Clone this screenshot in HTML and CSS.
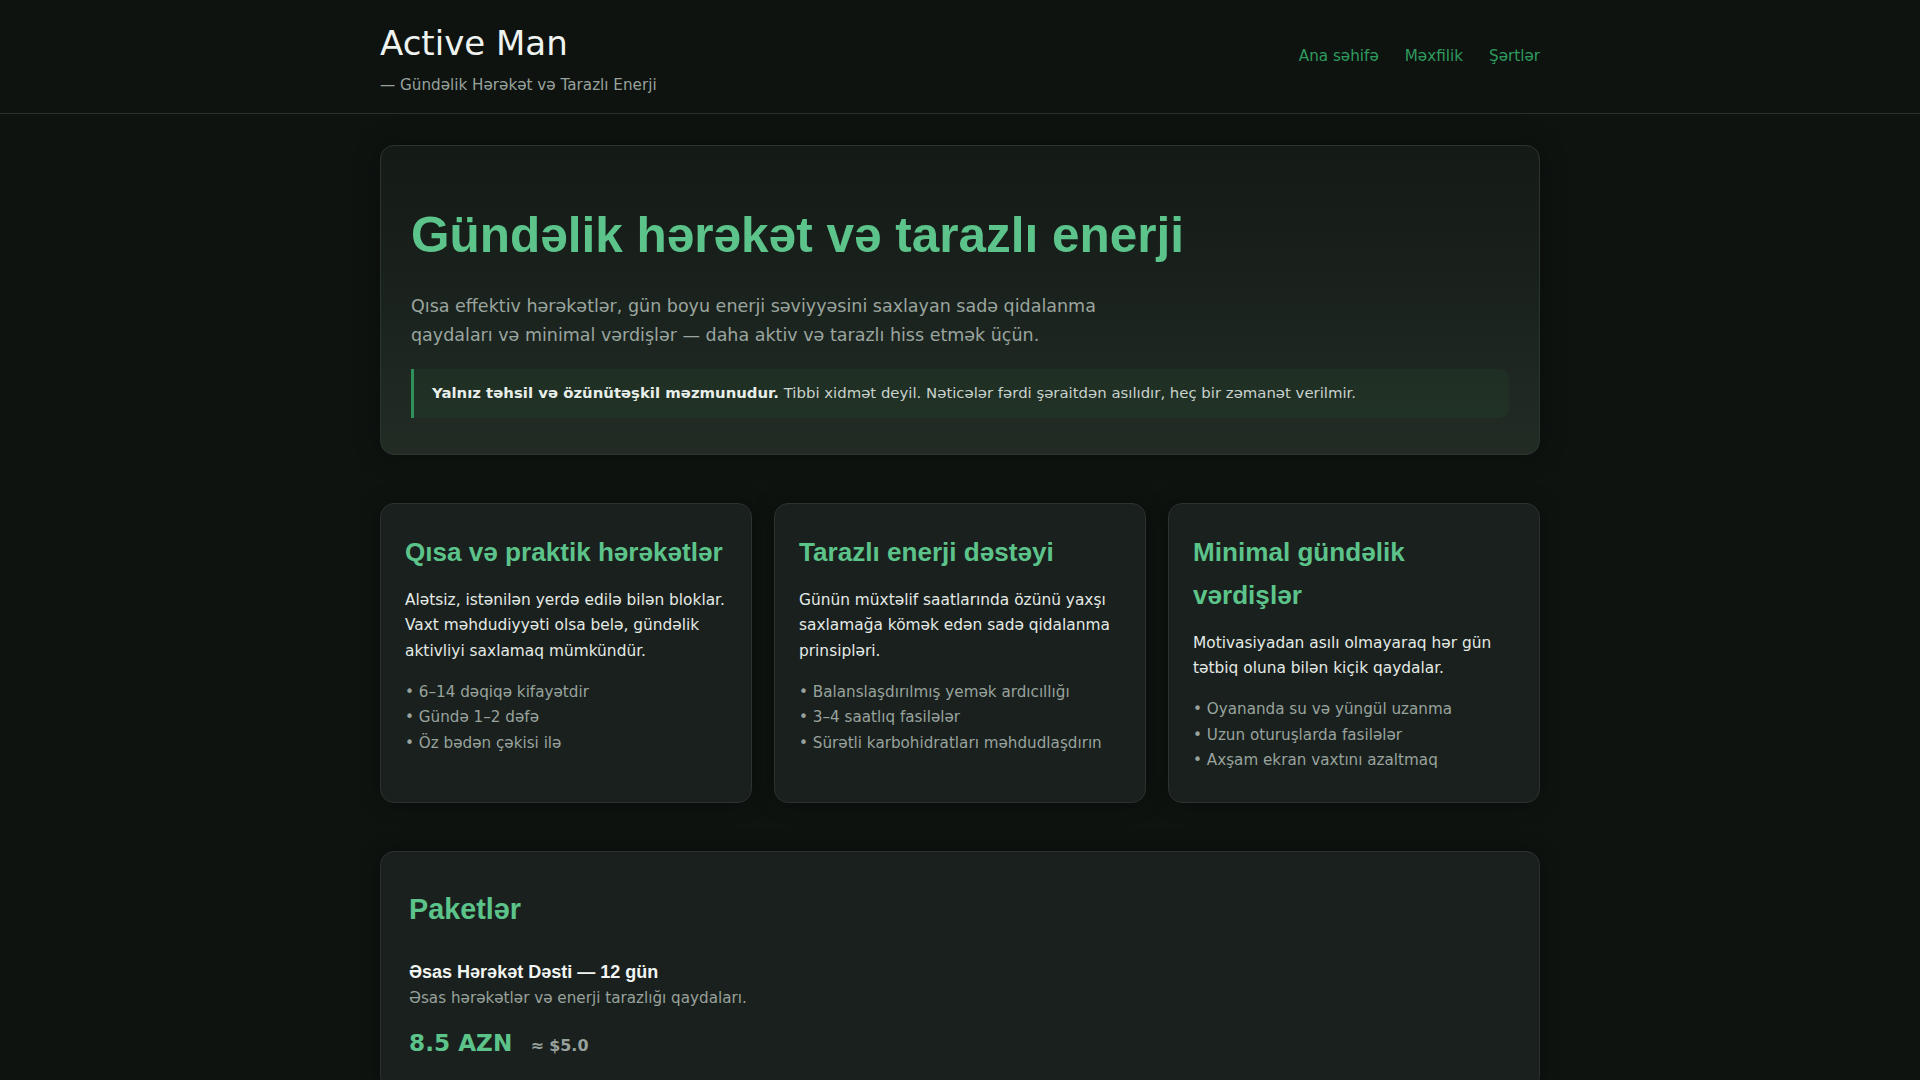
FILE: index.html
```html
<!DOCTYPE html>
<html lang="az">
<head>
<meta charset="utf-8">
<title>Active Man — Gündəlik Hərəkət və Tarazlı Enerji</title>
<link rel="stylesheet" href="styles.css">
</head>
<body>
<header class="site-header">
  <div class="container header-inner">
    <div class="brand">
      <div class="brand-title">Active Man</div>
      <div class="brand-sub">— Gündəlik Hərəkət və Tarazlı Enerji</div>
    </div>
    <nav class="nav">
      <a href="#">Ana səhifə</a>
      <a href="#">Məxfilik</a>
      <a href="#">Şərtlər</a>
    </nav>
  </div>
</header>
<main class="container">
  <section class="hero">
    <h1>Gündəlik hərəkət və tarazlı enerji</h1>
    <p class="lead">Qısa effektiv hərəkətlər, gün boyu enerji səviyyəsini saxlayan sadə qidalanma qaydaları və minimal vərdişlər — daha aktiv və tarazlı hiss etmək üçün.</p>
    <div class="notice"><strong>Yalnız təhsil və özünütəşkil məzmunudur.</strong> Tibbi xidmət deyil. Nəticələr fərdi şəraitdən asılıdır, heç bir zəmanət verilmir.</div>
  </section>
  <section class="features">
    <article class="card">
      <h3>Qısa və praktik hərəkətlər</h3>
      <p>Alətsiz, istənilən yerdə edilə bilən bloklar. Vaxt məhdudiyyəti olsa belə, gündəlik aktivliyi saxlamaq mümkündür.</p>
      <ul>
        <li>• 6–14 dəqiqə kifayətdir</li>
        <li>• Gündə 1–2 dəfə</li>
        <li>• Öz bədən çəkisi ilə</li>
      </ul>
    </article>
    <article class="card">
      <h3>Tarazlı enerji dəstəyi</h3>
      <p>Günün müxtəlif saatlarında özünü yaxşı saxlamağa kömək edən sadə qidalanma prinsipləri.</p>
      <ul>
        <li>• Balanslaşdırılmış yemək ardıcıllığı</li>
        <li>• 3–4 saatlıq fasilələr</li>
        <li>• Sürətli karbohidratları məhdudlaşdırın</li>
      </ul>
    </article>
    <article class="card">
      <h3>Minimal gündəlik vərdişlər</h3>
      <p>Motivasiyadan asılı olmayaraq hər gün tətbiq oluna bilən kiçik qaydalar.</p>
      <ul>
        <li>• Oyananda su və yüngül uzanma</li>
        <li>• Uzun oturuşlarda fasilələr</li>
        <li>• Axşam ekran vaxtını azaltmaq</li>
      </ul>
    </article>
  </section>
  <section class="packages">
    <h2>Paketlər</h2>
    <div class="package">
      <div class="package-title">Əsas Hərəkət Dəsti — 12 gün</div>
      <div class="package-desc">Əsas hərəkətlər və enerji tarazlığı qaydaları.</div>
      <div class="price">8.5 AZN <span class="price-usd">≈ $5.0</span></div>
    </div>
  </section>
</main>
</body>
</html>
```
FILE: styles.css
```css
* { box-sizing: border-box; }
html, body { margin: 0; padding: 0; }
body {
  background: #0e1310;
  color: #e4eae6;
  font-family: "DejaVu Sans", Verdana, sans-serif;
  line-height: 1.6;
}
.container {
  width: 1160px;
  margin: 0 auto;
}
.site-header {
  border-bottom: 1px solid #2a302c;
}
.header-inner {
  display: flex;
  justify-content: space-between;
  align-items: center;
  padding: 23px 0 16px;
}
.brand-title {
  font-size: 34px;
  line-height: 1.2;
  color: #eef3f0;
  margin-bottom: 9px;
}
.brand-sub {
  font-size: 15.2px;
  color: #98a29c;
}
.nav {
  display: flex;
  gap: 26px;
  margin-bottom: 8px;
}
.nav a {
  color: #2e9b5e;
  text-decoration: none;
  font-size: 15.2px;
}
main.container {
  padding-top: 31px;
}
.hero {
  border: 1px solid #2b342e;
  border-radius: 14px;
  background: linear-gradient(180deg, #141a16 0%, #1b231e 55%, #222c25 100%);
  padding: 28px 30px 36px;
  box-shadow: 0 0 24px rgba(0,0,0,0.35);
}
.hero h1 {
  font-family: "Liberation Sans", Arial, sans-serif;
  font-weight: 700;
  font-size: 49.5px;
  line-height: 1.2;
  color: #5cc48a;
  margin: 31px 0 27px;
}
.lead {
  font-size: 17.5px;
  line-height: 29px;
  color: #9aa59f;
  max-width: 720px;
  margin: 0 0 19px;
}
.notice {
  background: rgba(52, 150, 92, 0.07);
  border-left: 3px solid #2f9159;
  border-radius: 0 10px 10px 0;
  padding: 13px 18px 13px 18px;
  font-size: 14.9px;
  line-height: 23px;
  color: #c9d2cc;
}
.notice strong {
  color: #e8eee9;
}
.features {
  display: grid;
  grid-template-columns: repeat(3, 1fr);
  gap: 22px;
  margin-top: 48px;
}
.card {
  background: #1a201d;
  border: 1px solid #2b332e;
  border-radius: 14px;
  padding: 27px 24px 28px;
  box-shadow: 0 0 20px rgba(0,0,0,0.35);
}
.card h3 {
  font-family: "Liberation Sans", Arial, sans-serif;
  font-weight: 700;
  font-size: 26.1px;
  line-height: 43px;
  color: #5cc48a;
  margin: 0 0 14px;
}
.card p {
  font-size: 15.4px;
  line-height: 25.7px;
  margin: 0 0 15px;
  color: #e4eae6;
}
.card ul {
  list-style: none;
  margin: 0;
  padding: 0;
}
.card li {
  font-size: 15.2px;
  line-height: 25.7px;
  color: #98a39d;
}
.packages {
  margin-top: 48px;
  background: #1a201d;
  border: 1px solid #2b332e;
  border-radius: 14px;
  padding: 28px;
  box-shadow: 0 0 20px rgba(0,0,0,0.35);
}
.packages h2 {
  font-family: "Liberation Sans", Arial, sans-serif;
  font-weight: 700;
  font-size: 28.8px;
  line-height: 1.2;
  color: #5cc48a;
  margin: 12px 0 33px;
}
.package-title {
  font-family: "Liberation Sans", Arial, sans-serif;
  font-weight: 700;
  font-size: 18px;
  line-height: 1.4;
  color: #f2f6f3;
  margin-bottom: 1px;
}
.package-desc {
  font-size: 15.2px;
  line-height: 1.6;
  color: #98a29c;
  margin-bottom: 14px;
}
.price {
  font-weight: 700;
  font-size: 23.2px;
  line-height: 1.6;
  color: #5cc48a;
}
.price-usd {
  font-size: 15.9px;
  color: #98a29c;
  margin-left: 10px;
}
```
